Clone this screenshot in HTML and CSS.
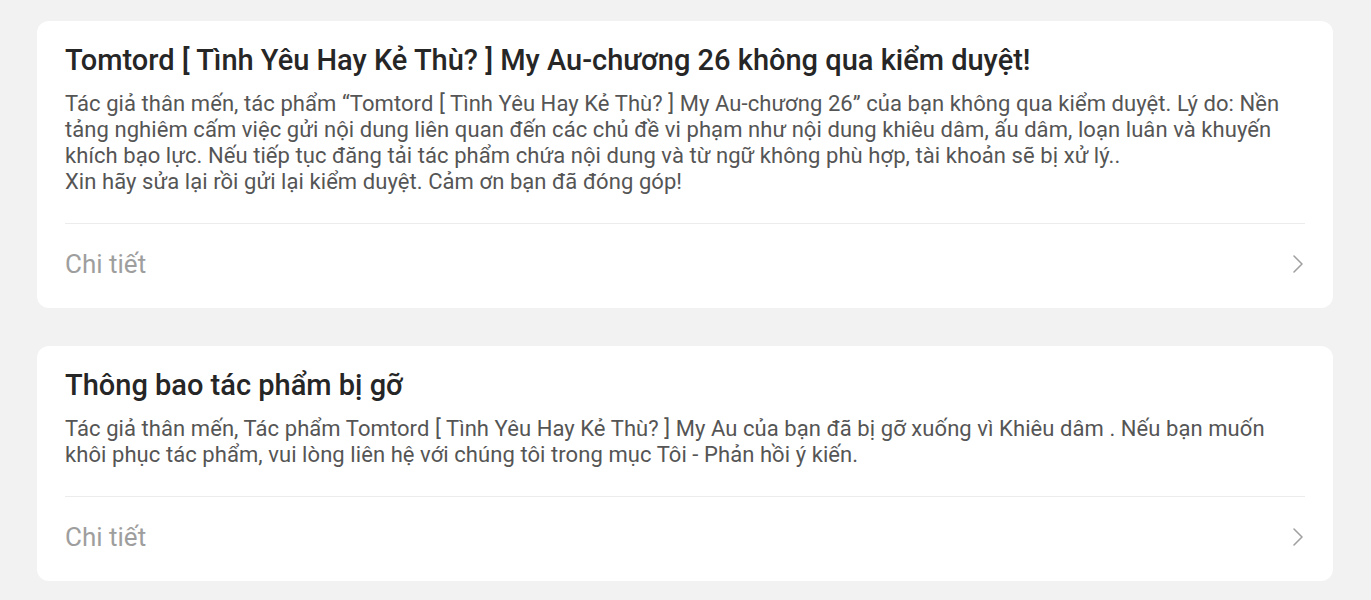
FILE: index.html
```html
<!DOCTYPE html>
<html lang="vi">
<head>
  <meta charset="UTF-8">
  <meta name="viewport" content="width=device-width, initial-scale=1.0">
  <title>Thông báo</title>
  <link rel="stylesheet" href="styles.css">
</head>
<body>
  <div class="list">
    <div class="card">
      <h2 class="card-title">Tomtord [ Tình Yêu Hay Kẻ Thù? ] My Au-chương 26 không qua kiểm duyệt!</h2>
      <p class="card-text">Tác giả thân mến, tác phẩm “Tomtord [ Tình Yêu Hay Kẻ Thù? ] My Au-chương 26” của bạn không qua kiểm duyệt. Lý do: Nền tảng nghiêm cấm việc gửi nội dung liên quan đến các chủ đề vi phạm như nội dung khiêu dâm, ấu dâm, loạn luân và khuyến khích bạo lực. Nếu tiếp tục đăng tải tác phẩm chứa nội dung và từ ngữ không phù hợp, tài khoản sẽ bị xử lý..<br>Xin hãy sửa lại rồi gửi lại kiểm duyệt. Cảm ơn bạn đã đóng góp!</p>
      <div class="card-footer">
        <span>Chi tiết</span>
        <svg class="chevron" width="12" height="20" viewBox="0 0 12 20"><path d="M2 2l8 8-8 8" fill="none" stroke="#a0a0a0" stroke-width="1.6" stroke-linecap="round" stroke-linejoin="round"/></svg>
      </div>
    </div>

    <div class="card">
      <h2 class="card-title">Thông bao tác phẩm bị gỡ</h2>
      <p class="card-text">Tác giả thân mến, Tác phẩm Tomtord [ Tình Yêu Hay Kẻ Thù? ] My Au của bạn đã bị gỡ xuống vì Khiêu dâm . Nếu bạn muốn khôi phục tác phẩm, vui lòng liên hệ với chúng tôi trong mục Tôi - Phản hồi ý kiến.</p>
      <div class="card-footer">
        <span>Chi tiết</span>
        <svg class="chevron" width="12" height="20" viewBox="0 0 12 20"><path d="M2 2l8 8-8 8" fill="none" stroke="#a0a0a0" stroke-width="1.6" stroke-linecap="round" stroke-linejoin="round"/></svg>
      </div>
    </div>
  </div>
</body>
</html>
```

FILE: styles.css
```css
body {
  margin: 0;
  background-color: #f2f2f2;
  font-family: Roboto, 'Noto Sans', sans-serif;
  color: #333;
}
.list {
  display: flex;
  flex-direction: column;
  gap: 38px;
  padding: 21px 38px 0 37px;
}
.card {
  background-color: #fff;
  border-radius: 12px;
  padding: 22px 28px 0;
}
.card-title {
  margin: 0;
  font-size: 29px;
  line-height: 34px;
  font-weight: 500;
  color: #262626;
}
.card-text {
  margin: 14px 0 0;
  font-size: 22px;
  line-height: 26px;
  letter-spacing: 0.07px;
  color: #555;
  padding-bottom: 28px;
  border-bottom: 1px solid #ececec;
}
.card-footer {
  display: flex;
  justify-content: space-between;
  align-items: center;
  padding: 25px 0 29px;
  font-size: 26px;
  line-height: 30px;
  color: #9e9e9e;
}
.chevron {
  margin-right: 1px;
}
```
